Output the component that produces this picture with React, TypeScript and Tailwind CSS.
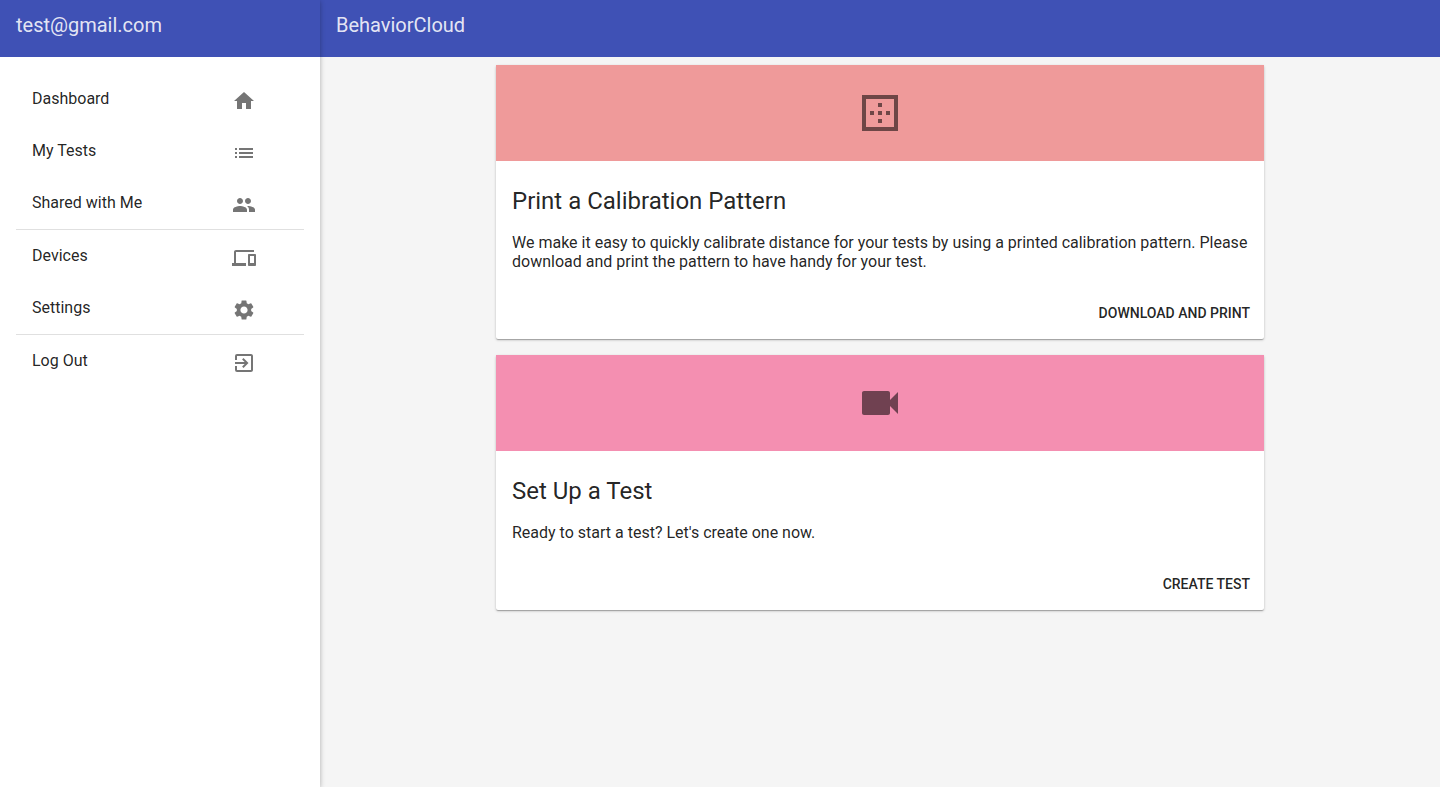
import React from 'react';
import {
  MdHome, MdList, MdPeople, MdDevices, MdSettings, MdExitToApp, MdBorderOuter, MdVideocam,
} from 'react-icons/md';
import type { IconType } from 'react-icons';

const groups: { label: string; Icon: IconType }[][] = [
  [
    { label: 'Dashboard', Icon: MdHome },
    { label: 'My Tests', Icon: MdList },
    { label: 'Shared with Me', Icon: MdPeople },
  ],
  [
    { label: 'Devices', Icon: MdDevices },
    { label: 'Settings', Icon: MdSettings },
  ],
  [{ label: 'Log Out', Icon: MdExitToApp }],
];

const cards = [
  {
    title: 'Print a Calibration Pattern',
    text: 'We make it easy to quickly calibrate distance for your tests by using a printed calibration pattern. Please download and print the pattern to have handy for your test.',
    action: 'Download and Print',
    Icon: MdBorderOuter,
    banner: 'bg-[#ef9a9a]',
  },
  {
    title: 'Set Up a Test',
    text: "Ready to start a test? Let's create one now.",
    action: 'Create Test',
    Icon: MdVideocam,
    banner: 'bg-[#f48fb1]',
  },
];

function Sidebar() {
  return (
    <aside className="relative z-10 flex w-80 shrink-0 flex-col bg-white shadow-[0_1px_5px_rgba(0,0,0,0.3)]">
      <header className="flex h-[57px] items-center bg-[#3f51b5] px-4 pb-2 text-xl text-white/87">
        test@gmail.com
      </header>
      <nav className="px-4 pt-4">
        {groups.map((group) => (
          <ul key={group[0].label} className="border-b border-black/12 last:border-b-0">
            {group.map(({ label, Icon }) => (
              <li key={label}>
                <a href="#" className="flex h-13 items-center pl-4 pr-12">
                  <span className="flex-1">{label}</span>
                  <Icon className="mt-1 size-6 text-black/54" />
                </a>
              </li>
            ))}
          </ul>
        ))}
      </nav>
    </aside>
  );
}

export default function App() {
  return (
    <div className="flex min-h-screen bg-[#f5f5f5] font-['Roboto',sans-serif] text-base text-black/87">
      <Sidebar />
      <div className="min-w-0 flex-1">
        <header className="flex h-[57px] items-center bg-[#3f51b5] px-4 pb-2">
          <h1 className="text-xl text-white/87">BehaviorCloud</h1>
        </header>
        <main className="mx-auto flex max-w-3xl flex-col gap-4 pt-2">
          {cards.map(({ title, text, action, Icon, banner }) => (
            <section
              key={title}
              className="rounded-xs bg-white shadow-[0_1px_3px_rgba(0,0,0,0.2),0_1px_1px_rgba(0,0,0,0.14),0_2px_1px_-1px_rgba(0,0,0,0.12)]"
            >
              <div className={`flex h-24 items-center justify-center ${banner}`}>
                <Icon className="size-12 text-black/54" />
              </div>
              <h2 className="px-4 pt-6 text-2xl">{title}</h2>
              <p className="p-4 leading-[19px]">{text}</p>
              <div className="flex justify-end p-2">
                <button type="button" className="h-9 rounded-xs px-1.5 text-sm font-medium uppercase">
                  {action}
                </button>
              </div>
            </section>
          ))}
        </main>
      </div>
    </div>
  );
}
